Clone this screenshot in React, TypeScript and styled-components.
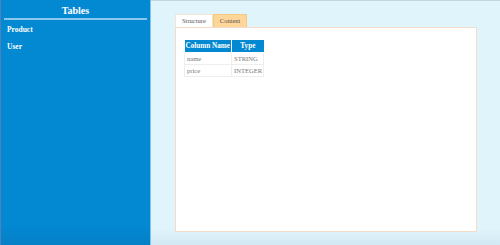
import React from "react";
import styled, { createGlobalStyle } from "styled-components";

const Global = createGlobalStyle`
  html, body { margin: 0; padding: 0; }
  body { background: #e0f4fc; font-family: "Liberation Serif", "Times New Roman", serif; }
`;

const Page = styled.div`
  display: flex;
  height: 245px;
  width: 500px;
  overflow: hidden;
`;

const Sidebar = styled.aside`
  width: 151px;
  flex: none;
  box-sizing: border-box;
  border-left: 1px solid #4f7fbf;
  border-right: 1px solid #7fc4ee;
  background: linear-gradient(to bottom, #0388d2 0, #0388d2 225px, #0580c6 245px);
  color: #fff;
  padding: 5px 3px 0 3px;
`;

const SideTitle = styled.h2`
  margin: 0;
  font-size: 10px;
  font-weight: bold;
  text-align: center;
  line-height: 12px;
  padding-bottom: 1px;
  border-bottom: 2px solid #8cc6ee;
`;

const SideList = styled.ul`
  list-style: none;
  margin: 0;
  padding: 5px 0 0 3px;
  display: flex;
  flex-direction: column;
  gap: 8px;
`;

const SideItem = styled.li`
  font-size: 7.5px;
  font-weight: bold;
  line-height: 9px;
`;

const Main = styled.main`
  flex: 1;
  box-sizing: border-box;
  border-top: 1px solid #c6d6de;
  background: linear-gradient(to bottom, #e0f4fc 0, #e0f4fc 228px, #d2e8f2 244px);
  padding: 13px 0 0 24px;
`;

const Tabs = styled.div`
  display: flex;
  height: 13px;
`;

const Tab = styled.div<{ $active?: boolean }>`
  box-sizing: border-box;
  height: 13px;
  padding: 0 6px;
  font-size: 6.5px;
  line-height: 12px;
  color: #555;
  background: ${(p) => (p.$active ? "#ffffff" : "#ffd699")};
  border: 1px solid ${(p) => (p.$active ? "#f4e4d4" : "#f5c97f")};
  border-bottom: none;
`;

const Panel = styled.section`
  box-sizing: border-box;
  width: 302px;
  height: 205px;
  background: #fff;
  border: 1px solid #f4dcc8;
  padding: 12px 0 0 8px;
`;

const Table = styled.table`
  border-collapse: collapse;
  font-family: "Liberation Serif", "Times New Roman", serif;
  font-size: 6.6px;
`;

const Th = styled.th`
  background: #0388d2;
  color: #fff;
  font-weight: bold;
  font-size: 7.2px;
  height: 12px;
  padding: 0 1px;
  border: 1px solid #fff;
  border-top: none;
  text-align: center;
  &:first-child { border-left: none; }
  &:last-child { border-right: none; }
`;

const Td = styled.td`
  color: #777;
  height: 11px;
  padding: 0 1px 0 2px;
  border: 1px solid #eeeeee;
`;

export default function App() {
  return (
    <>
      <Global />
      <Page>
        <Sidebar>
          <SideTitle>Tables</SideTitle>
          <SideList>
            <SideItem>Product</SideItem>
            <SideItem>User</SideItem>
          </SideList>
        </Sidebar>
        <Main>
          <Tabs>
            <Tab $active>Structure</Tab>
            <Tab>Content</Tab>
          </Tabs>
          <Panel>
            <Table>
              <thead>
                <tr>
                  <Th>Column Name</Th>
                  <Th>Type</Th>
                </tr>
              </thead>
              <tbody>
                <tr>
                  <Td>name</Td>
                  <Td>STRING</Td>
                </tr>
                <tr>
                  <Td>price</Td>
                  <Td>INTEGER</Td>
                </tr>
              </tbody>
            </Table>
          </Panel>
        </Main>
      </Page>
    </>
  );
}
